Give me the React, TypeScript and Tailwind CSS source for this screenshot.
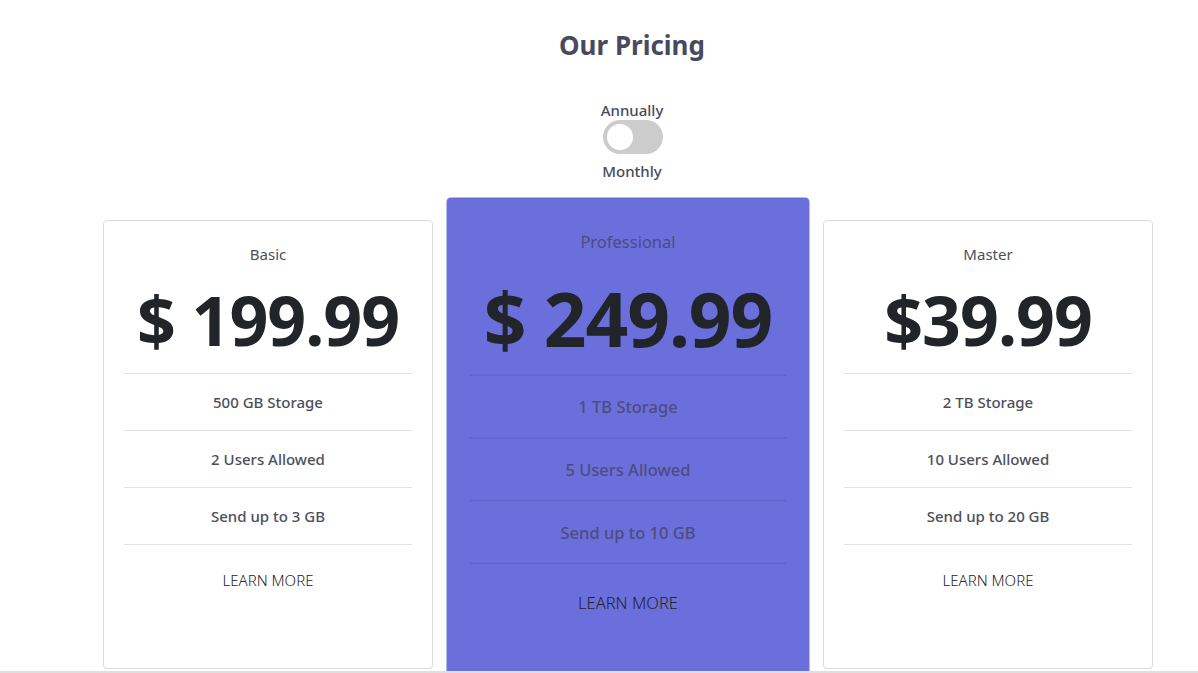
import React from "react";

type Plan = { name: string; price: string; features: string[]; featured?: boolean };

const plans: Plan[] = [
  { name: "Basic", price: "$ 199.99", features: ["500 GB Storage", "2 Users Allowed", "Send up to 3 GB"] },
  { name: "Professional", price: "$ 249.99", features: ["1 TB Storage", "5 Users Allowed", "Send up to 10 GB"], featured: true },
  { name: "Master", price: "$39.99", features: ["2 TB Storage", "10 Users Allowed", "Send up to 20 GB"] },
];

function Card({ plan }: { plan: Plan }) {
  const f = plan.featured;
  return (
    <div
      className={
        "w-[330px] h-[449px] shrink-0 rounded-[4px] px-[20px] flex flex-col " +
        (f
          ? "bg-[#6a6fdc] border border-[#6a6fdc] scale-110 origin-center pt-[8px]"
          : "bg-white border border-[#dcdcdc]")
      }
    >
      <div className={"pt-[22px] h-[44px] text-[15px] leading-[22px] text-center " + (f ? "text-[#4b4d7e] -mt-[2px]" : "text-[#4b4f5c]")}>
        {plan.name}
      </div>
      <div className={"h-[108px] flex items-center justify-center text-[#212529] font-bold text-[68px] leading-none tracking-[-1px] " + (f ? "pt-[9px] mb-[2px]" : "pt-[2px]")}>
        {plan.price}
      </div>
      {plan.features.map((ft) => (
        <div
          key={ft}
          className={
            "h-[57px] flex items-center justify-center border-t text-[15px] font-medium " +
            (f ? "border-[#5e63c8] text-[#4b4d7e]" : "border-[#e2e2e2] text-[#4b4f5c]")
          }
        >
          {ft}
        </div>
      ))}
      <div className={"border-t pt-[24px] text-center text-[15px] font-light leading-[22px] text-[#212529] " + (f ? "border-[#5e63c8]" : "border-[#e2e2e2]")}>
        LEARN MORE
      </div>
    </div>
  );
}

export default function App() {
  return (
    <div
      className="w-[1198px] h-[673px] bg-white flex flex-col overflow-hidden"
      style={{ fontFamily: '"Noto Sans", "Open Sans", sans-serif' }}
    >
      <div className="flex-1 overflow-hidden flex flex-col">
        <div className="pl-[66px] pt-[27px]">
          <h1 className="text-center text-[26px] leading-[36px] font-bold text-[#474a5e]">Our Pricing</h1>
          <div className="mt-[37px] flex flex-col items-center text-[15px] text-[#474a5e] font-medium">
            <span className="leading-[20px]">Annually</span>
            <div className="w-[60px] h-[34px] rounded-full bg-[#cccccc] flex items-center px-[4px] ml-[1px]">
              <div className="w-[26px] h-[26px] rounded-full bg-white" />
            </div>
            <span className="leading-[20px] mt-[7px]">Monthly</span>
          </div>
        </div>
        <div className="pl-[103px] mt-[39px] flex gap-[30px] items-start">
          {plans.map((p) => (
            <Card key={p.name} plan={p} />
          ))}
        </div>
      </div>
      <div className="h-[2px] bg-[#dedede] shrink-0" />
    </div>
  );
}
